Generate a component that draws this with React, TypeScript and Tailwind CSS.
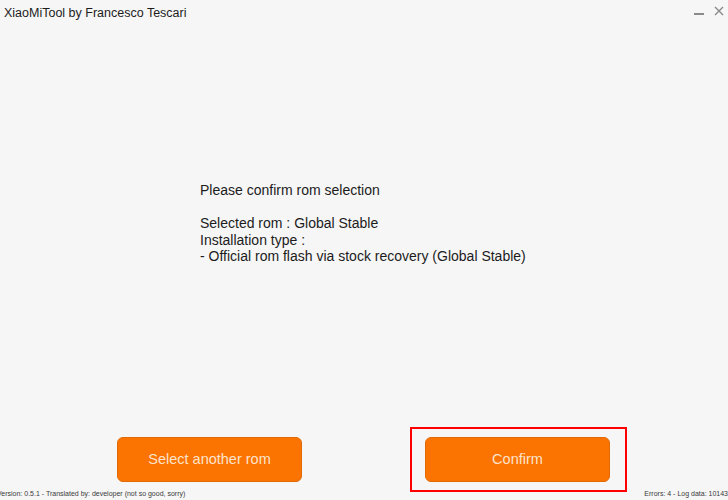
import React from 'react';

// Rom confirmation step of XiaoMiTool

const lines = [
  'Selected rom : Global Stable',
  'Installation type :',
  '- Official rom flash via stock recovery (Global Stable)',
];

function RomButton({ label }: { label: string }) {
  return (
    <button className="w-[185px] h-[45px] rounded-[6px] bg-[#fb7300] border border-[#e26a05] text-[#fde3cc] text-[14.5px] flex items-center justify-center">
      {label}
    </button>
  );
}

export default function App() {
  return (
    <div className="relative w-[728px] h-[500px] overflow-hidden bg-[#f6f6f6] flex flex-col text-[#1c1c1c] font-['Liberation_Sans',Arial,sans-serif]">
      {/* Title bar */}
      <div className="h-[26px] flex items-center justify-between pl-[4px] pr-[4px]">
        <span className="text-[12.5px] leading-none">XiaoMiTool by Francesco Tescari</span>
        <div className="flex items-center gap-[10px] text-[#8a8a8a]">
          <div className="w-[10px] h-[1.5px] bg-[#8a8a8a] mt-[2px]" />
          <svg width="10" height="10" viewBox="0 0 10 10" className="mb-[5px]">
            <path d="M1 1 L9 9 M9 1 L1 9" stroke="#8a8a8a" strokeWidth="1.4" />
          </svg>
        </div>
      </div>

      {/* Summary */}
      <div className="flex-1 pl-[200px] pt-[156px] text-[14px] leading-[16.5px]">
        <p>Please confirm rom selection</p>
        <p className="mt-[16.5px]">
          {lines.map((l) => (
            <span key={l} className="block">{l}</span>
          ))}
        </p>
      </div>

      {/* Actions */}
      <div className="flex pl-[117px] gap-[123px]">
        <RomButton label="Select another rom" />
        <RomButton label="Confirm" />
      </div>

      {/* Footer */}
      <div className="h-[18px] flex items-end justify-between text-[7px] leading-[12px] text-[#3a3a3a] whitespace-nowrap">
        <span className="-ml-[3px]">Version: 0.5.1 - Translated by: developer (not so good, sorry)</span>
        <span className="mr-0">Errors: 4 - Log data: 10143</span>
      </div>

      {/* highlight frame */}
      <div className="absolute left-[410px] top-[427px] w-[217px] h-[65px] border-2 border-[#ff0000]" />
    </div>
  );
}
